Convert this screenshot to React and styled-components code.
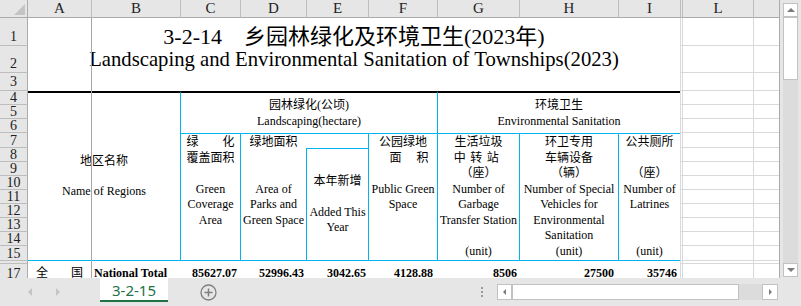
import React from "react";
import styled, { createGlobalStyle } from "styled-components";

const GlobalStyle = createGlobalStyle`
  html, body {
    margin: 0;
    padding: 0;
    background: #fff;
  }
  body {
    font-family: "Liberation Serif", "Noto Sans CJK SC", serif;
    color: #000;
  }
`;

const CYAN = "#00b4f0";
const GRID = "#d9d9d9";
const HEAD_BG = "#e6e6e6";
const HEAD_LINE = "#bdbdbd";

// column widths: row header, A..I, hidden J/K, L, M
const COLS = [28, 63, 89, 60, 66, 62, 69, 82, 99, 62, 2, 71, 26];
// row heights: rows 1..17
const ROWS = [28, 27, 18, 14, 14, 14, 15, 14, 14, 14, 14, 14, 14, 14, 15, 3, 24];
const LETTERS = ["A", "B", "C", "D", "E", "F", "G", "H", "I", "", "L", ""];

const SUBHEADS = [
  { c: 4, lines: ["绿　　化", "覆盖面积", "", "Green", "Coverage", "Area"] },
  { c: 5, lines: ["绿地面积", "", "", "Area of", "Parks and", "Green Space"] },
  { c: 7, lines: ["公园绿地", { t: "面\u3000 积", pl: 12 }, "", "Public Green", "Space"] },
  {
    c: 8,
    lines: ["生活垃圾", { t: "中转站", ls: 4.5 }, "（座）", "Number of", "Garbage", "Transfer Station", "", "(unit)"],
  },
  {
    c: 9,
    lines: ["环卫专用", "车辆设备", "（辆）", "Number of Special", "Vehicles for", "Environmental", "Sanitation", "(unit)"],
  },
  { c: 10, lines: ["公共厕所", "", "（座）", "Number of", "Latrines", "", "", "(unit)"] },
];

const TOTALS = [
  { c: 4, v: "85627.07", pr: 3 },
  { c: 5, v: "52996.43", pr: 2 },
  { c: 6, v: "3042.65", pr: 2 },
  { c: 7, v: "4128.88", pr: 4 },
  { c: 8, v: "8506", pr: 2 },
  { c: 9, v: "27500", pr: 4 },
  { c: 10, v: "35746", pr: 3 },
];

const Frame = styled.div`
  width: 801px;
  height: 306px;
  display: flex;
  flex-direction: column;
  background: ${HEAD_BG};
  overflow: hidden;
`;

const Workspace = styled.div`
  display: flex;
  height: 278px;
`;

const Sheet = styled.div`
  position: relative;
  width: 780px;
  height: 278px;
  box-sizing: border-box;
  border-right: 1px solid #ababab;
  overflow: hidden;
  background: #fff;
  display: grid;
  grid-template-columns: ${COLS.map((w) => w + "px").join(" ")};
  grid-template-rows: 18px ${ROWS.map((h) => h + "px").join(" ")};
`;

const Cell = styled.div`
  grid-column: ${(p) => p.$c} / span ${(p) => p.$cs || 1};
  grid-row: ${(p) => p.$r} / span ${(p) => p.$rs || 1};
  box-sizing: border-box;
  min-width: 0;
  min-height: 0;
`;

const Corner = styled(Cell)`
  background: ${HEAD_BG};
  border-right: 1px solid #ababab;
  border-bottom: 1px solid #ababab;
  display: flex;
  justify-content: flex-end;
  align-items: flex-end;
  padding: 0 2px 2px 0;
`;

const ColHead = styled(Cell)`
  background: ${HEAD_BG};
  border-left: ${(p) => (p.$first ? "none" : `1px solid ${HEAD_LINE}`)};
  border-bottom: 1px solid #ababab;
  display: flex;
  align-items: center;
  justify-content: center;
  font-size: 15px;
  color: #222;
`;

const RowHead = styled(Cell)`
  background: ${HEAD_BG};
  border-right: 1px solid #ababab;
  border-bottom: 1px solid ${HEAD_LINE};
  display: flex;
  justify-content: center;
  align-items: ${(p) => (p.$top ? "flex-start" : "flex-end")};
  padding-top: ${(p) => (p.$top ? 3 : 0)}px;
  padding-bottom: ${(p) => p.$pb || 0}px;
  font-size: 14px;
  line-height: 13px;
  color: #222;
`;

const GridCell = styled(Cell)`
  border-left: 1px solid ${GRID};
  border-bottom: 1px solid ${GRID};
`;

const Title = styled(Cell)`
  display: flex;
  justify-content: center;
  align-items: center;
  padding-top: ${(p) => p.$pt || 0}px;
  font-size: ${(p) => p.$size}px;
  white-space: nowrap;
`;

const HeadBlock = styled(Cell)`
  border-top: 2px solid #000;
  border-left: ${(p) => (p.$left ? `1px solid ${CYAN}` : "none")};
  border-bottom: ${(p) => (p.$bottom ? `1px solid ${CYAN}` : "none")};
  display: flex;
  flex-direction: column;
  justify-content: center;
  font-size: 12px;
`;

const Sub = styled(Cell)`
  border-top: ${(p) => (p.$top ? `1px solid ${CYAN}` : "none")};
  border-left: ${(p) => (p.$left ? `1px solid ${CYAN}` : "none")};
  border-bottom: ${(p) => (p.$bottom ? `1px solid ${CYAN}` : "none")};
  display: flex;
  flex-direction: column;
  justify-content: ${(p) => (p.$center ? "center" : "flex-start")};
  padding-top: ${(p) => (p.$center ? 0 : 1)}px;
  font-size: 12px;
`;

const Line = styled.div`
  height: ${(p) => p.$h || 15.5}px;
  line-height: ${(p) => p.$h || 15.5}px;
  text-align: center;
  white-space: nowrap;
  padding-left: ${(p) => p.$pl || 0}px;
  letter-spacing: ${(p) => p.$ls || 0}px;
`;

const Total = styled(Cell)`
  display: flex;
  justify-content: ${(p) => p.$align || "flex-end"};
  align-items: flex-start;
  padding: 2px ${(p) => p.$pr || 0}px 0 ${(p) => p.$pl || 0}px;
  font-size: 12px;
  line-height: 14px;
  font-weight: ${(p) => (p.$plain ? 400 : 700)};
  white-space: nowrap;
`;

const Freeze = styled.div`
  position: absolute;
  left: 91px;
  top: 18px;
  bottom: 0;
  width: 1px;
  background: #a6a6a6;
`;

const VStrip = styled.div`
  width: 21px;
  height: 278px;
  box-sizing: border-box;
  padding: 3px 0 0 3px;
`;

const VBar = styled.div`
  width: 15px;
  height: 274px;
  display: flex;
  flex-direction: column;
  background: #dcdcdc;
`;

const ScrollBtn = styled.div`
  box-sizing: border-box;
  width: ${(p) => p.$w || 15}px;
  height: ${(p) => p.$h || 14}px;
  background: #fff;
  border: 1px solid #c2c2c2;
  display: flex;
  align-items: center;
  justify-content: center;
  flex-shrink: 0;
`;

const Thumb = styled.div`
  box-sizing: border-box;
  flex-shrink: 0;
  background: #fff;
  border: 1px solid #c2c2c2;
  width: ${(p) => p.$w}px;
  height: ${(p) => p.$h}px;
`;

const Track = styled.div`
  flex: 1;
`;

const Tri = styled.span`
  width: 0;
  height: 0;
  border-style: solid;
  border-color: transparent;
  ${(p) =>
    p.$dir === "up"
      ? `border-width: 0 4px 4px 4px; border-bottom-color: ${p.$color};`
      : p.$dir === "down"
      ? `border-width: 4px 4px 0 4px; border-top-color: ${p.$color};`
      : p.$dir === "left"
      ? `border-width: ${p.$s || 4}px ${p.$s || 4}px ${p.$s || 4}px 0; border-right-color: ${p.$color};`
      : `border-width: ${p.$s || 4}px 0 ${p.$s || 4}px ${p.$s || 4}px; border-left-color: ${p.$color};`}
`;

const TabBar = styled.div`
  display: flex;
  align-items: center;
  height: 28px;
  padding-left: 26px;
  background: ${HEAD_BG};
`;

const NavBtn = styled.div`
  width: 8px;
  display: flex;
  justify-content: center;
  margin-left: ${(p) => p.$ml || 0}px;
`;

const SheetTab = styled.div`
  align-self: flex-start;
  margin-left: 38px;
  width: 68px;
  height: 24px;
  box-sizing: border-box;
  padding-top: 2px;
  background: #fff;
  border-bottom: 2px solid #217346;
  color: #217346;
  font-family: "Noto Sans", sans-serif;
  font-size: 15px;
  display: flex;
  align-items: center;
  justify-content: center;
`;

const AddBtn = styled.div`
  margin-left: 32px;
  width: 17px;
  height: 17px;
  display: flex;
`;

const Dots = styled.div`
  margin-left: 264px;
  display: flex;
  flex-direction: column;
  gap: 2px;
`;

const Dot = styled.span`
  width: 2px;
  height: 2px;
  background: #9a9a9a;
`;

const HBar = styled.div`
  margin-left: 14px;
  width: 281px;
  height: 16px;
  display: flex;
  background: #dcdcdc;
`;

function App() {
  return (
    <>
      <GlobalStyle />
      <Frame>
        <Workspace>
          <Sheet>
            <Corner $c={1} $r={1}>
              <svg width="11" height="11" viewBox="0 0 11 11">
                <polygon points="11,0 11,11 0,11" fill="#c4c4c4" />
              </svg>
            </Corner>
            {LETTERS.map((l, i) => (
              <ColHead key={"h" + i} $c={i + 2} $r={1} $first={i === 0}>
                {l}
              </ColHead>
            ))}
            {ROWS.map((h, i) => (
              <RowHead key={"r" + i} $c={1} $r={i + 2} $top={i === 16} $pb={h > 16 && i < 16 ? 2 : 0}>
                {i === 15 ? "" : i + 1}
              </RowHead>
            ))}
            {ROWS.map((h, i) =>
              [11, 12, 13].map((c) => <GridCell key={`g${i}-${c}`} $c={c} $r={i + 2} />)
            )}

            <Title $c={2} $cs={9} $r={2} $size={22} $pt={3}>
              3-2-14　乡园林绿化及环境卫生(2023年)
            </Title>
            <Title $c={2} $cs={9} $r={3} $size={20.7}>
              Landscaping and Environmental Sanitation of Townships(2023)
            </Title>

            <HeadBlock $c={2} $cs={2} $r={5} $rs={12} $bottom>
              <Line $h={15}>地区名称</Line>
              <Line $h={15} />
              <Line $h={15}>Name of Regions</Line>
            </HeadBlock>
            <HeadBlock $c={4} $cs={4} $r={5} $rs={3} $left>
              <Line $h={16}>园林绿化(公顷)</Line>
              <Line $h={16}>Landscaping(hectare)</Line>
            </HeadBlock>
            <HeadBlock $c={8} $cs={3} $r={5} $rs={3} $left>
              <Line $h={16}>环境卫生</Line>
              <Line $h={16}>Environmental Sanitation</Line>
            </HeadBlock>

            {SUBHEADS.map((s) => (
              <Sub key={"s" + s.c} $c={s.c} $r={8} $rs={9} $top $left $bottom>
                {s.lines.map((ln, j) =>
                  typeof ln === "string" ? (
                    <Line key={j}>{ln}</Line>
                  ) : (
                    <Line key={j} $pl={ln.pl} $ls={ln.ls}>
                      {ln.t}
                    </Line>
                  )
                )}
              </Sub>
            ))}
            <Sub $c={6} $r={8} $top />
            <Sub $c={6} $r={9} $rs={8} $top $left $bottom $center>
              <Line>本年新增</Line>
              <Line />
              <Line>Added This</Line>
              <Line>Year</Line>
            </Sub>

            <Total $c={2} $r={18} $align="space-between" $pl={8} $pr={8} $plain>
              <span>全</span>
              <span>国</span>
            </Total>
            <Total $c={3} $r={18} $align="flex-start" $pl={3}>
              National Total
            </Total>
            {TOTALS.map((t) => (
              <Total key={"t" + t.c} $c={t.c} $r={18} $pr={t.pr}>
                {t.v}
              </Total>
            ))}

            <Freeze />
          </Sheet>
          <VStrip>
            <VBar>
              <ScrollBtn>
                <Tri $dir="up" $color="#7a7a7a" />
              </ScrollBtn>
              <Thumb $w={15} $h={63} />
              <Track />
              <ScrollBtn>
                <Tri $dir="down" $color="#7a7a7a" />
              </ScrollBtn>
            </VBar>
          </VStrip>
        </Workspace>
        <TabBar>
          <NavBtn>
            <Tri $dir="left" $color="#c4c4c4" />
          </NavBtn>
          <NavBtn $ml={20}>
            <Tri $dir="right" $color="#c4c4c4" />
          </NavBtn>
          <SheetTab>3-2-15</SheetTab>
          <AddBtn>
            <svg width="17" height="17" viewBox="0 0 17 17">
              <circle cx="8.5" cy="8.5" r="7.5" fill="none" stroke="#7f7f7f" strokeWidth="1.3" />
              <path d="M8.5 4.5v8M4.5 8.5h8" stroke="#7f7f7f" strokeWidth="1.5" />
            </svg>
          </AddBtn>
          <Dots>
            <Dot />
            <Dot />
            <Dot />
          </Dots>
          <HBar>
            <ScrollBtn $w={15} $h={16}>
              <Tri $dir="left" $s={3} $color="#7a7a7a" />
            </ScrollBtn>
            <Thumb $w={227} $h={16} />
            <Track />
            <ScrollBtn $w={16} $h={16}>
              <Tri $dir="right" $s={3} $color="#7a7a7a" />
            </ScrollBtn>
          </HBar>
        </TabBar>
      </Frame>
    </>
  );
}

export default App;
